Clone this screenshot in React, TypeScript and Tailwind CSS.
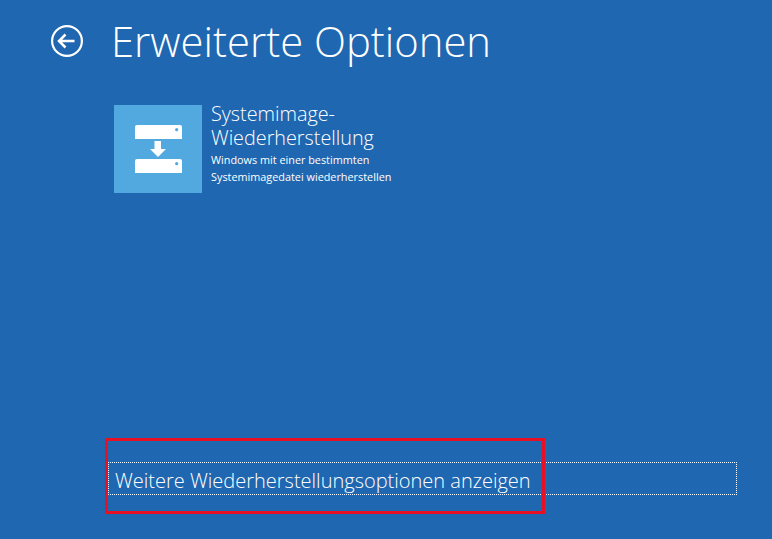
function BackIcon() {
  return (
    <svg width="34" height="34" viewBox="0 0 34 34" fill="none" stroke="white">
      <circle cx="17" cy="17" r="14.9" strokeWidth="2.2" />
      <path d="M24.5 17H9.5M15.5 10.5L9 17l6.5 6.5" strokeWidth="2.5" />
    </svg>
  );
}

function ImageIcon() {
  return (
    <svg width="47" height="48" viewBox="0 0 47 48" className="block">
      <path d="M2 0H45a2 2 0 0 1 2 2V14H0V2a2 2 0 0 1 2-2z" fill="white" />
      <circle cx="41.7" cy="4.7" r="1.6" fill="#52a9e0" />
      <path d="M19.5 16H26V24H31L23 32 15 24H19.5z" fill="white" />
      <path d="M2 34H45a2 2 0 0 1 2 2V48H0V36a2 2 0 0 1 2-2z" fill="white" />
      <circle cx="41.7" cy="38.7" r="1.6" fill="#52a9e0" />
    </svg>
  );
}

export default function App() {
  return (
    <div className="relative flex h-[539px] w-[772px] flex-col overflow-hidden bg-[#1f67b1] font-['Open_Sans',sans-serif] text-white">
      <div className="flex h-[82px] items-center pl-[50px]">
        <BackIcon />
        <h1 className="ml-[27px] text-[41.8px] leading-none font-light">
          Erweiterte Optionen
        </h1>
      </div>

      <div className="mt-[23px] ml-[114px] flex">
        <div className="flex h-[88px] w-[88px] items-center justify-center bg-[#52a9e0] pl-px">
          <ImageIcon />
        </div>
        <div className="ml-[9px] -mt-[3px]">
          <div className="text-[19.8px] leading-[24px] font-light">
            Systemimage-
            <br />
            Wiederherstellung
          </div>
          <div className="mt-[2px] text-[10.85px] leading-[16.5px]">
            Windows mit einer bestimmten
            <br />
            Systemimagedatei wiederherstellen
          </div>
        </div>
      </div>

      <div className="mt-[269px] ml-[108px] flex h-[33px] w-[629px] items-center border border-dotted border-white pt-[5px] pl-[6px]">
        <span className="text-[20px] leading-none font-light">
          Weitere Wiederherstellungsoptionen anzeigen
        </span>
      </div>

      {/* annotation on top of the screenshot */}
      <div className="absolute top-[438px] left-[105px] h-[76px] w-[440px] border-[3px] border-[#e81123]" />
    </div>
  );
}
